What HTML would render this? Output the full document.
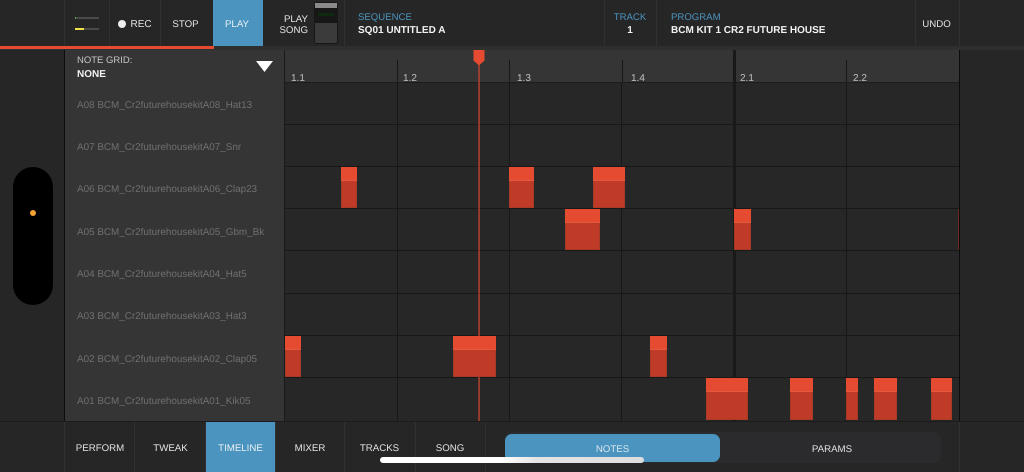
<!DOCTYPE html>
<html><head><meta charset="utf-8"><style>
html,body{margin:0;padding:0;background:#262626}
#r{position:relative;width:1024px;height:472px;overflow:hidden;background:#262626;font-family:"Liberation Sans",sans-serif;color:#e4e4e4;font-size:9.7px;text-rendering:geometricPrecision;filter:blur(.35px)}
#r div{position:absolute}
.t{white-space:nowrap;line-height:14px;height:14px}
.c{transform:translateX(-50%)}
.v{width:1px;background:#313131}
.l{left:77px;color:#707070;font-size:9.9px}
.b{font-weight:bold;color:#f2f2f2;font-size:10px}
.bl{color:#4b94bf;font-size:9.6px}
.g{width:1px;background:#181818;top:83px;height:338px}
.h{left:285px;width:674px;height:1px;background:#181818}
.tk{width:1px;background:#181818;top:60px;height:22px}
.rl{color:#c0c0c0;top:72px;font-size:10px}
.n{background:#c03b27;box-shadow:inset 0 0 0 1px #a83a28}
.n i{position:absolute;left:0;right:0;top:0;height:14px;background:#e54b31;border-bottom:1px solid #e2593f;display:block;box-sizing:border-box}
</style></head><body><div id="r">
<!-- top bar -->
<div style="left:0;top:46px;width:1024px;height:4px;background:#2f2f2f"></div>
<div style="left:0;top:46px;width:214px;height:3px;background:#e54b31"></div>
<div class="v" style="left:64px;top:0;height:46px"></div>
<div class="v" style="left:109px;top:0;height:46px"></div>
<div class="v" style="left:160px;top:0;height:46px"></div>
<div class="v" style="left:344px;top:0;height:46px"></div>
<div class="v" style="left:604px;top:0;height:46px"></div>
<div class="v" style="left:656px;top:0;height:46px"></div>
<div class="v" style="left:915px;top:0;height:46px"></div>
<div class="v" style="left:959px;top:0;height:46px"></div>
<div style="left:75px;top:17px;width:24px;height:2px;background:#4a4a4a"></div>
<div style="left:75px;top:17px;width:1px;height:2px;background:#5c9a50"></div>
<div style="left:75px;top:28px;width:24px;height:2px;background:#4a4a4a"></div>
<div style="left:75px;top:28px;width:9px;height:2px;background:#efe04a"></div>
<div style="left:117.5px;top:19.5px;width:8px;height:8px;border-radius:50%;background:#eee"></div>
<div class="t" style="left:130.5px;top:18px;font-size:10px">REC</div>
<div class="t c" style="left:185.5px;top:18px">STOP</div>
<div style="left:213px;top:0;width:50px;height:46px;background:#4b94bf"></div>
<div class="t c" style="left:237px;top:18px;color:#e8f0f4">PLAY</div>
<div class="t" style="right:716px;top:13px">PLAY</div>
<div class="t" style="right:716px;top:24px">SONG</div>
<div style="left:314px;top:2px;width:24px;height:42px;background:#171717;border-radius:3px"></div>
<div style="left:315px;top:3px;width:22px;height:5px;background:#8a8a8a"></div>
<div style="left:318px;top:13px;width:16px;height:3px;background:#0f2a10"></div>
<div style="left:315px;top:23px;width:22px;height:20px;background:#3b3b3b;border-radius:0 0 2px 2px"></div>
<div class="t bl" style="left:358px;top:11px">SEQUENCE</div>
<div class="t b" style="left:358px;top:24px">SQ01 UNTITLED A</div>
<div class="t bl c" style="left:630px;top:11px">TRACK</div>
<div class="t b c" style="left:630px;top:24px">1</div>
<div class="t bl" style="left:671px;top:11px">PROGRAM</div>
<div class="t b" style="left:671px;top:24px">BCM KIT 1 CR2 FUTURE HOUSE</div>
<div class="t c" style="left:936.5px;top:18px">UNDO</div>
<!-- left pad -->
<div style="left:13px;top:167px;width:40px;height:138px;border-radius:20px;background:#000"></div>
<div style="left:30px;top:209.5px;width:6px;height:6px;border-radius:50%;background:#f4a235"></div>
<!-- sidebar -->
<div style="left:64px;top:50px;width:1px;height:371px;background:#0c0c0c"></div>
<div style="left:65px;top:50px;width:219px;height:371px;background:#353535"></div>
<div class="t" style="left:77px;top:54px;color:#c8c8c8;font-size:9.5px">NOTE GRID:</div>
<div class="t b" style="left:77px;top:68px">NONE</div>
<svg style="position:absolute;left:256px;top:61px" width="17" height="11"><path d="M0 0H17L8.5 11Z" fill="#fff"/></svg>
<div class="t l" style="top:99px">A08 BCM_Cr2futurehousekitA08_Hat13</div>
<div class="t l" style="top:141px">A07 BCM_Cr2futurehousekitA07_Snr</div>
<div class="t l" style="top:183px">A06 BCM_Cr2futurehousekitA06_Clap23</div>
<div class="t l" style="top:226px">A05 BCM_Cr2futurehousekitA05_Gbm_Bk</div>
<div class="t l" style="top:268px">A04 BCM_Cr2futurehousekitA04_Hat5</div>
<div class="t l" style="top:310px">A03 BCM_Cr2futurehousekitA03_Hat3</div>
<div class="t l" style="top:353px">A02 BCM_Cr2futurehousekitA02_Clap05</div>
<div class="t l" style="top:395px">A01 BCM_Cr2futurehousekitA01_Kik05</div>
<!-- grid -->
<div style="left:284px;top:50px;width:1px;height:371px;background:#191919"></div>
<div style="left:285px;top:50px;width:674px;height:32px;background:#353535"></div>
<div style="left:285px;top:82px;width:674px;height:339px;background:#272727"></div>
<div style="left:959px;top:50px;width:1px;height:371px;background:#0c0c0c"></div>
<div class="h" style="top:82px;background:#1c1c1c"></div>
<div class="h" style="top:124px"></div><div class="h" style="top:166px"></div><div class="h" style="top:208px"></div><div class="h" style="top:250px"></div><div class="h" style="top:293px"></div><div class="h" style="top:335px"></div><div class="h" style="top:377px"></div>
<div class="g" style="left:397px"></div><div class="g" style="left:509px"></div><div class="g" style="left:621px"></div><div class="g" style="left:846px"></div>
<div class="tk" style="left:397px"></div><div class="tk" style="left:509px"></div><div class="tk" style="left:622px"></div><div class="tk" style="left:846px"></div>
<div style="left:733px;top:50px;width:3px;height:371px;background:#191919"></div>
<div class="t rl" style="left:291px">1.1</div><div class="t rl" style="left:403px">1.2</div><div class="t rl" style="left:517px">1.3</div><div class="t rl" style="left:631px">1.4</div><div class="t rl" style="left:740px">2.1</div><div class="t rl" style="left:853px">2.2</div>
<!-- playhead -->
<svg style="position:absolute;left:470px;top:50px" width="20" height="371"><rect x="8.4" y="0" width="1.3" height="371" fill="#c8452f"/></svg>
<!-- notes -->
<div class="n" style="left:341px;top:167px;width:16px;height:41px"><i></i></div>
<div class="n" style="left:509px;top:167px;width:25px;height:41px"><i></i></div>
<div class="n" style="left:593px;top:167px;width:32px;height:41px"><i></i></div>
<div class="n" style="left:565px;top:209px;width:35px;height:41px"><i></i></div>
<div class="n" style="left:734px;top:209px;width:17px;height:41px"><i></i></div>
<div style="left:958px;top:209px;width:1px;height:41px;background:#6e2a1e"></div>
<div class="n" style="left:285px;top:336px;width:16px;height:41px"><i></i></div>
<div class="n" style="left:453px;top:336px;width:43px;height:41px"><i></i></div>
<div class="n" style="left:650px;top:336px;width:17px;height:41px"><i></i></div>
<div class="n" style="left:706px;top:378px;width:42px;height:42px"><i></i></div>
<div class="n" style="left:790px;top:378px;width:23px;height:42px"><i></i></div>
<div class="n" style="left:846px;top:378px;width:12px;height:42px"><i></i></div>
<div class="n" style="left:874px;top:378px;width:23px;height:42px"><i></i></div>
<div class="n" style="left:931px;top:378px;width:21px;height:42px"><i></i></div>
<svg style="position:absolute;left:473px;top:50px" width="12" height="16"><path d="M0.5 0H11.5V10.5L6 15.5L0.5 10.5Z" fill="#e54b31"/></svg>
<!-- bottom bar -->
<div style="left:0;top:421px;width:1024px;height:1px;background:#1c1c1c"></div>
<div class="v" style="left:64px;top:422px;height:50px"></div>
<div class="v" style="left:134px;top:422px;height:50px"></div>
<div class="v" style="left:205px;top:422px;height:50px"></div>
<div class="v" style="left:275px;top:422px;height:50px"></div>
<div class="v" style="left:344px;top:422px;height:50px"></div>
<div class="v" style="left:415px;top:422px;height:50px"></div>
<div class="v" style="left:485px;top:422px;height:50px"></div>
<div class="v" style="left:959px;top:422px;height:50px"></div>
<div style="left:206px;top:422px;width:69px;height:50px;background:#4b94bf"></div>
<div class="t c" style="left:100px;top:442px">PERFORM</div>
<div class="t c" style="left:170.5px;top:442px">TWEAK</div>
<div class="t c" style="left:240.5px;top:442px;color:#e8f0f4">TIMELINE</div>
<div class="t c" style="left:310px;top:442px">MIXER</div>
<div class="t c" style="left:379.5px;top:442px">TRACKS</div>
<div class="t c" style="left:450px;top:442px">SONG</div>
<div style="left:505px;top:432px;width:436px;height:31px;border-radius:7px;background:#2b2b2d"></div>
<div style="left:505px;top:434px;width:215px;height:28px;border-radius:7px;background:#4b94bf"></div>
<div class="t c" style="left:612.5px;top:443px;color:#d8e6ee">NOTES</div>
<div class="t c" style="left:832px;top:443px">PARAMS</div>
<div style="left:380px;top:457px;width:264px;height:6px;border-radius:3px;background:linear-gradient(90deg,#fff 0,#fff 45%,#e4e4e4 60%,#dedede 100%)"></div>
</div></body></html>
